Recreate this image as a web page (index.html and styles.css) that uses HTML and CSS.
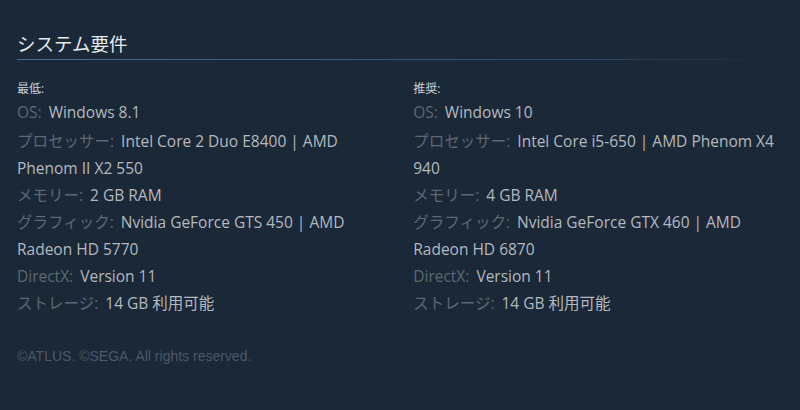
FILE: index.html
```html
<!DOCTYPE html>
<html lang="ja">
<head>
<meta charset="utf-8">
<link rel="stylesheet" href="styles.css">
</head>
<body>
<div class="sysreq">
  <h2 class="title">システム要件</h2>
  <div class="cols">
    <div class="col">
      <div class="colhead">最低:</div>
      <ul class="list">
        <li><span class="lbl">OS:</span><span class="val">Windows 8.1</span></li>
        <li><span class="lbl">プロセッサー:</span><span class="val">Intel Core 2 Duo E8400 | AMD Phenom II X2 550</span></li>
        <li><span class="lbl">メモリー:</span><span class="val">2 GB RAM</span></li>
        <li><span class="lbl">グラフィック:</span><span class="val">Nvidia GeForce GTS 450 | AMD Radeon HD 5770</span></li>
        <li><span class="lbl">DirectX:</span><span class="val">Version 11</span></li>
        <li><span class="lbl">ストレージ:</span><span class="val">14 GB 利用可能</span></li>
      </ul>
    </div>
    <div class="col">
      <div class="colhead">推奨:</div>
      <ul class="list">
        <li><span class="lbl">OS:</span><span class="val">Windows 10</span></li>
        <li><span class="lbl">プロセッサー:</span><span class="val">Intel Core i5-650 | AMD Phenom X4 940</span></li>
        <li><span class="lbl">メモリー:</span><span class="val">4 GB RAM</span></li>
        <li><span class="lbl">グラフィック:</span><span class="val">Nvidia GeForce GTX 460 | AMD Radeon HD 6870</span></li>
        <li><span class="lbl">DirectX:</span><span class="val">Version 11</span></li>
        <li><span class="lbl">ストレージ:</span><span class="val">14 GB 利用可能</span></li>
      </ul>
    </div>
  </div>
  <p class="legal">©ATLUS. ©SEGA. All rights reserved.</p>
</div>
</body>
</html>
```

FILE: styles.css
```css
html, body {
  margin: 0;
  padding: 0;
  background: #1b2838;
  height: 100%;
}
body {
  font-family: "Open Sans", "Noto Sans CJK JP", sans-serif;
  color: #acb2b8;
}
.sysreq {
  padding: 30px 0 0 17px;
  width: 762px;
}
.title {
  margin: 0;
  font-size: 18.5px;
  font-weight: normal;
  color: #e6e9eb;
  line-height: 28px;
  padding-bottom: 3px;
}
.title::after {
  content: "";
  display: block;
  height: 1px;
  margin-top: 1px;
  width: 755px;
  background: linear-gradient(to right, #41708f 0%, #36597a 45%, #2a4560 80%, rgba(42,69,96,0) 100%);
}
.cols {
  display: grid;
  grid-template-columns: 48% 48%;
  column-gap: 4%;
  margin-top: 18px;
}
.colhead {
  font-size: 12px;
  line-height: 16px;
  color: #c6d0d8;
  margin-bottom: 2px;
}
.list {
  list-style: none;
  margin: 0;
  padding: 0;
  font-size: 15.5px;
  line-height: 27px;
}
.list li:first-child {
  margin-bottom: 2px;
}
.lbl {
  color: #5e6870;
  margin-right: 7px;
}
.val {
  color: #b3b9bf;
}
.legal {
  margin: 31px 0 0 0;
  font-family: "Liberation Sans", Arial, sans-serif;
  font-size: 14px;
  color: #4b5966;
}
```
